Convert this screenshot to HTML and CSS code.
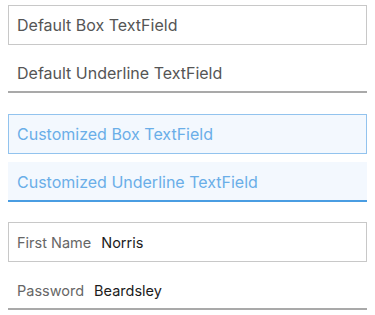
FILE: index.html
```html
<!DOCTYPE html>
<html lang="en">
<head>
    <meta charset="UTF-8">
    <meta name="viewport" content="width=device-width, initial-scale=1.0">
    <title>TextFields</title>
    <link rel="stylesheet" href="styles.css">
</head>
<body>

<div class="page">
    <!-- Default fields -->
    <div class="group">
        <div class="field box">Default Box TextField</div>
        <div class="field underline">Default Underline TextField</div>
    </div>

    <!-- Customized fields -->
    <div class="group">
        <div class="field box custom">Customized Box TextField</div>
        <div class="field underline custom">Customized Underline TextField</div>
    </div>

    <!-- Labeled fields -->
    <div class="group labeled">
        <div class="field box">
            <span class="label">First Name</span>
            <span class="value">Norris</span>
        </div>
        <div class="field underline">
            <span class="label">Password</span>
            <span class="value">Beardsley</span>
        </div>
    </div>
</div>

</body>
</html>
```

FILE: styles.css
```css
/* General Styling */
body {
    margin: 0;
    background: #ffffff;
    font-family: Inter, "Liberation Sans", sans-serif;
}
.page {
    padding: 5px 8px 0;
    display: flex;
    flex-direction: column;
    gap: 20.5px;
}
.group {
    display: flex;
    flex-direction: column;
    gap: 8px;
}

/* Field Styling */
.field {
    height: 40px;
    box-sizing: border-box;
    display: flex;
    align-items: center;
    gap: 10px;
    padding: 0 9px;
    font-size: 16px;
    color: #555;
}
.box {
    border: 1px solid #c8c8c8;
    padding: 0 8px;
}
.underline {
    border-bottom: 2px solid #a9a9a9;
    padding-top: 2px;
}

/* Customized */
.custom {
    background-color: #f3f8fe;
    color: #6aaee8;
}
.box.custom {
    border-color: #92c3ee;
}
.underline.custom {
    border-bottom-color: #4a9de2;
}

/* Labels */
.labeled .field {
    font-size: 14.5px;
}
.label {
    color: #666;
}
.value {
    color: #1c1c1c;
}
```
